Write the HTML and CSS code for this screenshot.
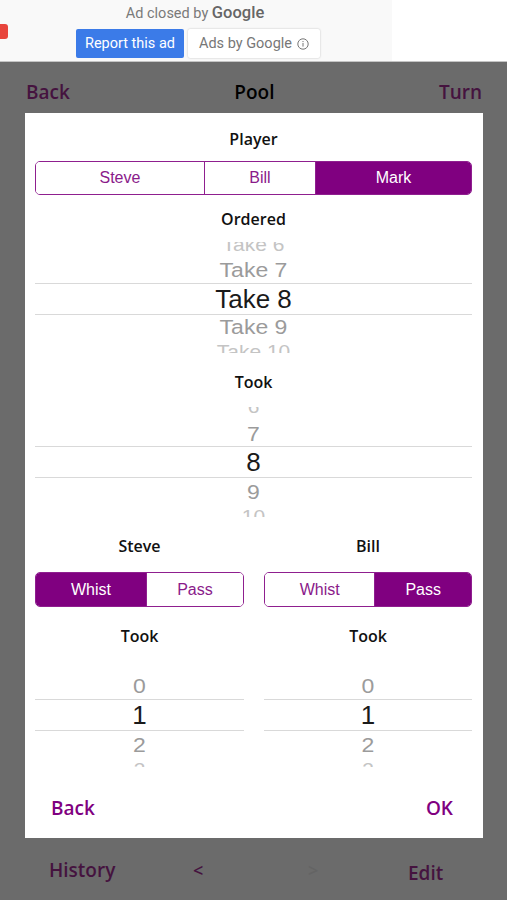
FILE: index.html
```html
<!DOCTYPE html>
<html>
<head>
<meta charset="utf-8">
<link rel="stylesheet" href="styles.css">
</head>
<body>
<div class="ad">
  <div class="ad-main">
    <span class="ad-flag"></span>
    <div class="ad-closed">Ad closed by <span class="g">Google</span></div>
    <div class="ad-buttons">
      <span class="btn-report">Report this ad</span>
      <span class="btn-ads">Ads by Google <svg class="info" viewBox="0 0 12 12" width="12" height="12"><circle cx="6" cy="6" r="5.2" fill="none" stroke="#777" stroke-width="1"/><rect x="5.5" y="5" width="1" height="3.6" fill="#777"/><rect x="5.5" y="3" width="1" height="1.1" fill="#777"/></svg></span>
    </div>
  </div>
  <div class="ad-rest"></div>
</div>

<div class="nav">
  <span class="nav-link">Back</span>
  <span class="nav-title">Pool</span>
  <span class="nav-link">Turn</span>
</div>

<div class="modal">
  <div class="label first">Player</div>
  <div class="seg seg-player">
    <span class="seg-item w-steve">Steve</span>
    <span class="seg-item w-bill">Bill</span>
    <span class="seg-item w-mark on">Mark</span>
  </div>

  <div class="label mt12">Ordered</div>
  <div class="picker picker-ordered">
    <div class="row far-top r6"><span>Take 6</span></div>
    <div class="row near r7"><span>Take 7</span></div>
    <div class="row sel"><span>Take 8</span></div>
    <div class="row near r9"><span>Take 9</span></div>
    <div class="row far-bot r10"><span>Take 10</span></div>
  </div>

  <div class="label mt17">Took</div>
  <div class="picker picker-took">
    <div class="row far-top r6b"><span>6</span></div>
    <div class="row near r7b"><span>7</span></div>
    <div class="row sel"><span>8</span></div>
    <div class="row near r9b"><span>9</span></div>
    <div class="row far-bot r10b"><span>10</span></div>
  </div>

  <div class="cols">
    <div class="col">
      <div class="label">Steve</div>
      <div class="seg seg-half">
        <span class="seg-item w-whist on">Whist</span>
        <span class="seg-item w-pass">Pass</span>
      </div>
      <div class="label mt17">Took</div>
      <div class="picker picker-small">
        <div class="row blank"></div>
        <div class="row near r0"><span>0</span></div>
        <div class="row sel"><span>1</span></div>
        <div class="row near r2"><span>2</span></div>
        <div class="row far-bot r3"><span>3</span></div>
      </div>
    </div>
    <div class="col">
      <div class="label">Bill</div>
      <div class="seg seg-half">
        <span class="seg-item w-whist2">Whist</span>
        <span class="seg-item w-pass2 on">Pass</span>
      </div>
      <div class="label mt17">Took</div>
      <div class="picker picker-small">
        <div class="row blank"></div>
        <div class="row near r0"><span>0</span></div>
        <div class="row sel"><span>1</span></div>
        <div class="row near r2"><span>2</span></div>
        <div class="row far-bot r3"><span>3</span></div>
      </div>
    </div>
  </div>

  <div class="footer">
    <span class="foot-link">Back</span>
    <span class="foot-link">OK</span>
  </div>
</div>

<div class="bottom">
  <span class="b-link">History</span>
  <span class="b-arrow">&lt;</span>
  <span class="b-arrow faint">&gt;</span>
  <span class="b-link edit">Edit</span>
</div>
</body>
</html>
```

FILE: styles.css
```css
* { box-sizing: border-box; }
html, body { margin: 0; padding: 0; }
body {
  width: 507px;
  height: 900px;
  overflow: hidden;
  background: #6b6b6b;
  font-family: "Open Sans", "Noto Sans", sans-serif;
}

/* ad */
.ad {
  display: flex;
  height: 62px;
  border-bottom: 1px solid #c4c4c4;
}
.ad-main {
  position: relative;
  width: 392px;
  background: #f9f9f9;
  display: flex;
  flex-direction: column;
  align-items: center;
  padding-top: 3px;
}
.ad-rest { flex: 1; background: #fff; }
.ad-flag {
  position: absolute;
  left: 0;
  top: 24px;
  width: 8px;
  height: 15px;
  background: #e8453c;
  border-radius: 0 3px 3px 0;
}
.ad-closed {
  font-family: "Roboto", "Liberation Sans", sans-serif;
  font-size: 14.5px;
  color: #7a7a7a;
  line-height: 20px;
  padding-right: 2px;
}
.ad-closed .g { font-size: 16.5px; color: #666; font-weight: 500; }
.ad-buttons {
  display: flex;
  gap: 4px;
  margin-top: 5px;
  margin-left: 4px;
}
.btn-report {
  width: 108px;
  height: 29px;
  background: #3b7be8;
  color: #fff;
  border-radius: 2px;
  font-family: "Roboto", "Liberation Sans", sans-serif;
  font-size: 14.5px;
  display: flex;
  align-items: center;
  justify-content: center;
}
.btn-ads {
  width: 132px;
  height: 29px;
  background: #fff;
  color: #777;
  border-radius: 2px;
  box-shadow: 0 0 2px rgba(0,0,0,0.25);
  font-family: "Roboto", "Liberation Sans", sans-serif;
  font-size: 14.5px;
  display: flex;
  align-items: center;
  justify-content: center;
  gap: 5px;
}

/* nav */
.nav {
  height: 51px;
  display: flex;
  justify-content: space-between;
  align-items: center;
  padding: 9px 25px 0 26px;
  font-size: 19px;
  font-weight: 600;
}
.nav-link { color: #45133f; }
.nav-title { color: #000; }

/* modal */
.modal {
  width: 458px;
  margin-left: 25px;
  background: #fff;
  padding: 0 11px 0 10px;
  display: flex;
  flex-direction: column;
}
.label {
  height: 24px;
  line-height: 24px;
  text-align: center;
  font-size: 16px;
  font-weight: 600;
  color: #111;
}
.label.first { margin-top: 14px; }
.mt12 { margin-top: 12px; }
.mt17 { margin-top: 17px; }

.seg {
  display: flex;
  height: 34px;
  border: 1px solid #8f1f8f;
  border-radius: 5px;
  overflow: hidden;
  margin-top: 10px;
  font-family: "Liberation Sans", Arial, sans-serif;
  font-size: 16px;
}
.seg-item {
  display: flex;
  align-items: center;
  justify-content: center;
  color: #8a1a8a;
  background: #fff;
}
.seg-item + .seg-item { border-left: 1px solid #8f1f8f; }
.seg-item.on { background: #800080; color: #fff; }
.w-steve { flex: 169; }
.w-bill { flex: 111; }
.w-mark { flex: 156; }
.w-whist, .w-whist2 { flex: 111; }
.w-pass, .w-pass2 { flex: 97; }
.seg-half { margin-top: 14px; height: 35px; }

/* pickers */
.picker {
  display: flex;
  flex-direction: column;
  overflow: hidden;
  font-family: "Liberation Sans", Arial, sans-serif;
}
.picker-ordered { margin-top: 11px; height: 111px; }
.picker-took { margin-top: 13px; height: 110px; }
.picker-small { height: 119px; }
.row {
  display: flex;
  justify-content: center;
  align-items: center;
  flex: none;
  overflow: hidden;
}
.row span { display: block; white-space: nowrap; }
.row.sel {
  height: 32px;
  border-top: 1px solid #d9d9d9;
  border-bottom: 1px solid #d9d9d9;
  font-size: 26px;
  color: #1a1a1a;
}
.row.near { font-size: 23px; color: #9b9b9b; }
.row.near span { transform: scaleY(0.9); }
.row.r7 { height: 27px; padding-top: 2px; }
.row.r9 { height: 26px; padding-bottom: 2px; }
.row.r7b { height: 26px; padding-top: 2px; }
.row.r9b { height: 28px; }
.row.r0 { height: 26px; padding-top: 1px; }
.row.r2 { height: 28px; }

.row.far-top, .row.far-bot { font-size: 21px; color: #c4c4c4; overflow: visible; }
.row.far-top { align-items: flex-end; }
.row.far-top span { line-height: 21px; transform: scaleY(0.85); transform-origin: 50% 100%; margin-bottom: 2px; }
.row.r6 { height: 14px; }
.row.r6b { height: 13px; }
.row.r6b span { margin-bottom: 4px; }
.row.far-bot { align-items: flex-start; }
.row.far-bot span { line-height: 21px; transform: scaleY(0.85); transform-origin: 50% 0; margin-top: 2px; }
.row.r10 { height: 12px; }
.row.r10b { height: 11px; }
.row.r3 { height: 8px; }
.row.blank { height: 25px; }

.cols {
  display: grid;
  grid-template-columns: 209px 208px;
  column-gap: 20px;
  margin-top: 17px;
}
.col { display: flex; flex-direction: column; }

.footer {
  display: flex;
  justify-content: space-between;
  padding: 29px 19px 18px 16px;
  height: 71px;
  line-height: 24px;
  font-size: 19px;
  font-weight: 600;
}
.foot-link { color: #800080; }

/* bottom bar */
.bottom {
  display: grid;
  grid-template-columns: 144px 115px 100px auto;
  padding: 20px 0 0 49px;
  font-size: 19px;
  font-weight: 600;
  line-height: 24px;
}
.b-link { color: #45133f; }
.b-arrow { color: #45133f; font-size: 18px; }
.b-arrow.faint { color: #646464; }
.edit { padding-top: 3px; }
```
